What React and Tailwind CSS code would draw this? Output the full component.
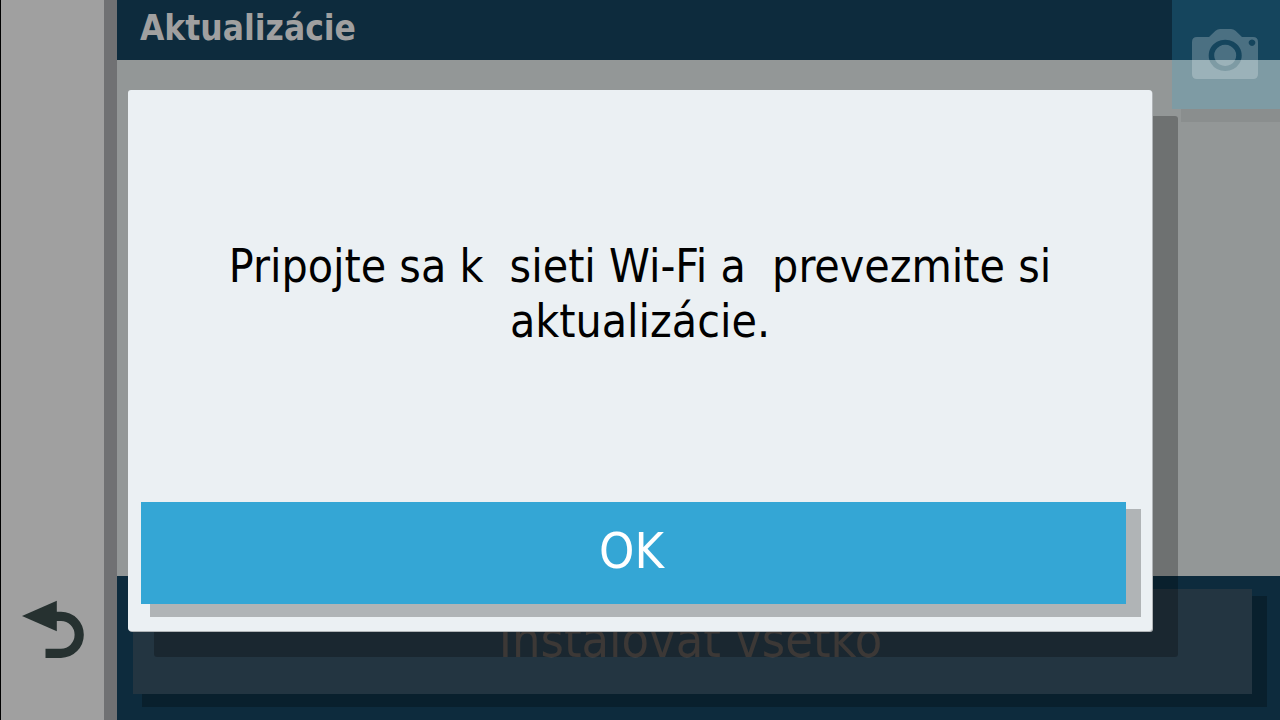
function BackIcon() {
  return (
    <svg viewBox="0 0 64 58" className="h-[58px] w-[64px]" aria-hidden="true">
      <path d="M1 15.900 L35.800 0.700 V31.200 Z" fill="#263130" />
      <path d="M34 16.300 H40 A18.200 18.500 0 0 1 40 53.300 H24.500" fill="none" stroke="#263130" strokeWidth="9.2" />
    </svg>
  );
}

function CameraIcon() {
  return (
    <svg viewBox="0 0 66 50" className="h-[50px] w-[66px]" aria-hidden="true">
      <path
        fill="#ffffff"
        fillOpacity="0.23"
        fillRule="evenodd"
        d="M5 8 H17 L23.5 1.8 Q25.5 0 28 0 H39 Q41.500 0 43.500 1.800 L50 8 H61 Q66 8 66 13 V45 Q66 50 61 50 H5 Q0 50 0 45 V13 Q0 8 5 8 Z M33.200 10.700 a16.500 15.700 0 1 0 0.010 0 Z M33.200 15.800 a11 10.600 0 1 1 -0.010 0 Z M60 10.400 a3.300 3.300 0 1 0 0.010 0 Z"
      />
    </svg>
  );
}

export default function App() {
  return (
    <div className="relative flex min-h-screen overflow-hidden bg-[#939797] font-['DejaVu_Sans_Condensed','DejaVu_Sans',sans-serif]">
      <aside className="flex w-[104px] shrink-0 flex-col justify-end border-l border-black bg-[#a0a0a0]">
        <button type="button" aria-label="Späť" className="flex justify-center pb-[62px]">
          <BackIcon />
        </button>
      </aside>
      <div className="w-[13px] shrink-0 bg-[#707173]" />

      <div className="flex min-w-0 flex-1 flex-col">
        <header className="flex h-[60px] items-center bg-[#0d2b3d] px-[23px] pb-1">
          <h1 className="text-[35px] leading-[40px] font-bold text-[#a0a0a0]">Aktualizácie</h1>
        </header>
        <main className="flex-1" />
        <footer className="bg-[#0d2b3d] pt-[13px] pr-7 pb-[26px] pl-4">
          <button
            type="button"
            className="block h-[105px] w-full bg-[#233541] pr-1 pb-1 text-[50px] leading-[60px] text-[#504b48] shadow-[12px_10px_0_3px_rgba(0,0,0,0.25)]"
          >
            Inštalovať všetko
          </button>
        </footer>
      </div>

      <button
        type="button"
        aria-label="Fotoaparát"
        className="absolute top-0 right-0 flex h-[109px] w-[108px] items-center justify-center bg-[rgba(54,170,213,0.21)] pr-[2px] pb-[2px] shadow-[12px_10px_0_3px_rgba(0,0,0,0.06)]"
      >
        <CameraIcon />
      </button>

      <div className="absolute inset-0 flex items-center justify-center pt-px">
        <section
          role="dialog"
          aria-modal="true"
          aria-labelledby="dialog-message"
          className="flex h-3/4 min-h-[541px] w-4/5 flex-col rounded-[3px] bg-[#ebf0f3] pr-[26px] pb-[27px] pl-[13px] shadow-[1px_1px_0_#b0b4b7,26px_26px_0_rgba(0,0,0,0.25)]"
        >
          <div className="flex flex-1 items-center justify-center pb-1 pl-[13px]">
            <p
              id="dialog-message"
              className="max-w-[860px] text-center text-[46px] leading-[55px] whitespace-pre-wrap text-black"
            >
              {"Pripojte sa k  sieti Wi-Fi a  prevezmite si aktualizácie."}
            </p>
          </div>
          <button
            type="button"
            className="h-[102px] w-full bg-[#34a6d5] pr-1 pb-1 text-[50px] leading-[60px] text-white shadow-[12px_10px_0_3px_rgba(0,0,0,0.25)]"
          >
            OK
          </button>
        </section>
      </div>
    </div>
  );
}
